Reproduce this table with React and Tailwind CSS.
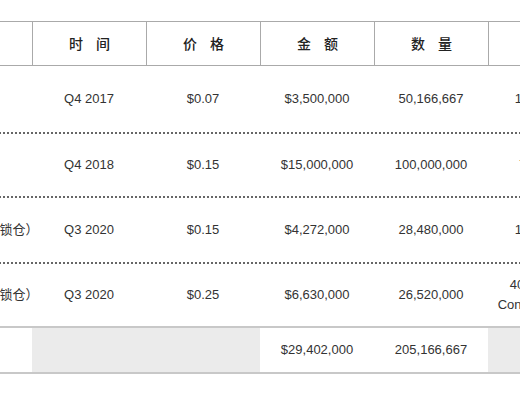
import React from "react";

const cols = ["w-[124px]", "w-[114px]", "w-[114px]", "w-[114px]", "w-[114px]", "w-[114px]"];

const heads = [[], ["时", "间"], ["价", "格"], ["金", "额"], ["数", "量"], ["解", "锁"]];

const rows = [
  { h: "h-[68px]", cells: ["种子轮", "Q4 2017", "$0.07", "$3,500,000", "50,166,667", ["12 Months"]] },
  { h: "h-[64px]", cells: ["私募轮", "Q4 2018", "$0.15", "$15,000,000", "100,000,000", ["Tradable"]] },
  { h: "h-[66px]", cells: ["第一战略轮（锁仓）", "Q3 2020", "$0.15", "$4,272,000", "28,480,000", ["12 Months"]] },
  { h: "h-[62px]", cells: ["第二战略轮（锁仓）", "Q3 2020", "$0.25", "$6,630,000", "26,520,000", ["40% at TGE", "Continuous 12M"]] },
];

function Cell({ i, children, className = "" }) {
  return (
    <div className={`${cols[i]} shrink-0 flex flex-col items-center justify-center text-center ${className}`}>
      {children}
    </div>
  );
}

export default function App() {
  return (
    <div
      className="w-[520px] h-[400px] overflow-hidden bg-white pt-[21px] text-[#333] text-[13px]"
      style={{ fontFamily: '"Liberation Sans", "Noto Sans CJK SC", sans-serif' }}
    >
      {/* header */}
      <div className="flex h-[45px] border-y border-[#aaa] ml-[-92px] w-[800px]">
        {heads.map((h, i) => (
          <Cell key={i} i={i} className={i > 0 ? "border-l border-[#aaa]" : ""}>
            <div
              className="flex gap-[13px] text-[14px] text-[#222] font-medium pb-[1px]"
              style={{ fontFamily: '"Noto Sans CJK SC", sans-serif' }}
            >
              {h.map((c) => (
                <span key={c}>{c}</span>
              ))}
            </div>
          </Cell>
        ))}
      </div>

      {/* body rows */}
      {rows.map((r, ri) => (
        <div
          key={ri}
          className={`flex ${r.h} ml-[-92px] w-[800px] ${ri < 3 ? "border-b-2 border-dotted border-[#666]" : ""}`}
        >
          {r.cells.map((c, i) => (
            <Cell key={i} i={i} className={`leading-[20px] ${i === 0 ? "pl-[20px]" : ""}`}>
              {Array.isArray(c) ? (
                c.map((l) => (
                  <span key={l} className="whitespace-nowrap">
                    {l}
                  </span>
                ))
              ) : (
                <span className="whitespace-nowrap">{c}</span>
              )}
            </Cell>
          ))}
        </div>
      ))}

      {/* total */}
      <div className="flex h-[48px] ml-[-92px] w-[800px] border-y-2 border-[#c8c8c8]">
        <Cell i={0} />
        <Cell i={1} className="bg-[#ebebeb]" />
        <Cell i={2} className="bg-[#ebebeb]" />
        <Cell i={3}>$29,402,000</Cell>
        <Cell i={4}>205,166,667</Cell>
        <Cell i={5} className="bg-[#ebebeb]" />
      </div>
    </div>
  );
}
